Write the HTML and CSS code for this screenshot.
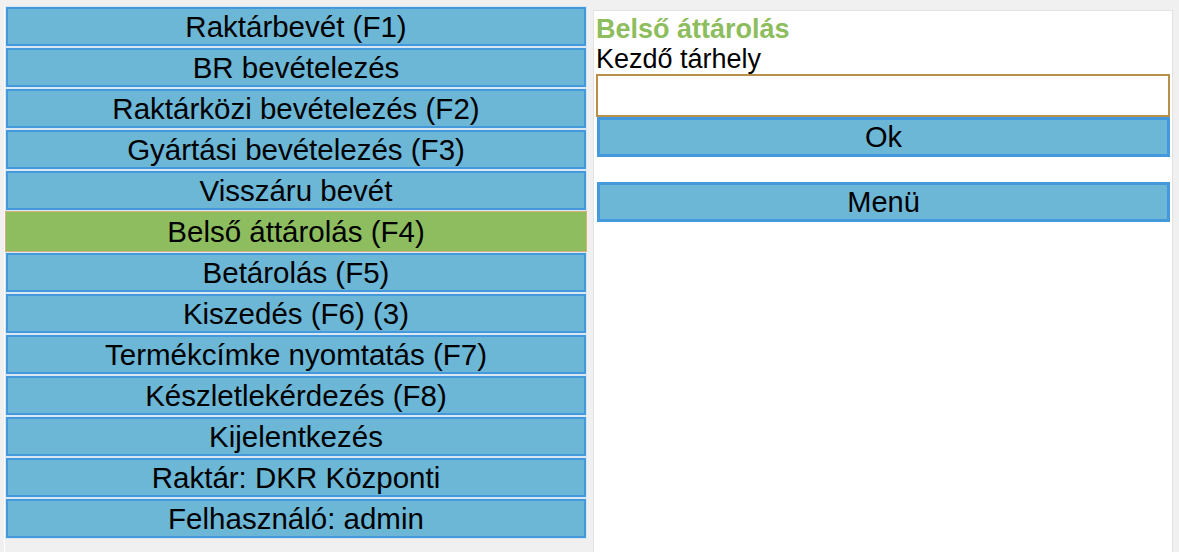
FILE: index.html
```html
<!DOCTYPE html>
<html lang="hu">
<head>
<meta charset="utf-8">
<link rel="stylesheet" href="styles.css">
</head>
<body>
<div class="app">
  <nav class="menu">
    <div class="item">Raktárbevét (F1)</div>
    <div class="item">BR bevételezés</div>
    <div class="item">Raktárközi bevételezés (F2)</div>
    <div class="item">Gyártási bevételezés (F3)</div>
    <div class="item">Visszáru bevét</div>
    <div class="item active">Belső áttárolás (F4)</div>
    <div class="item">Betárolás (F5)</div>
    <div class="item">Kiszedés (F6) (3)</div>
    <div class="item">Termékcímke nyomtatás (F7)</div>
    <div class="item">Készletlekérdezés (F8)</div>
    <div class="item">Kijelentkezés</div>
    <div class="item">Raktár: DKR Központi</div>
    <div class="item">Felhasználó: admin</div>
  </nav>
  <main class="panel">
    <div class="title">Belső áttárolás</div>
    <div class="label">Kezdő tárhely</div>
    <input class="field" type="text">
    <div class="btn">Ok</div>
    <div class="btn menu-btn">Menü</div>
  </main>
</div>
</body>
</html>
```
FILE: styles.css
```css
html, body {
  margin: 0;
  padding: 0;
  background: #f0f0f0;
  font-family: "Liberation Sans", Arial, sans-serif;
  color: #000;
}
.app {
  display: flex;
  align-items: stretch;
  height: 552px;
  padding: 7px 6px 0 4px;
  box-sizing: border-box;
}
.menu {
  width: 580px;
  display: flex;
  flex-direction: column;
  gap: 2px;
  border-left: 1px solid #fff;
  padding-left: 1px;
}
.item {
  height: 39px;
  box-sizing: border-box;
  background: #6cb6d6;
  border: 2px solid #4499dd;
  text-align: center;
  font-size: 29.5px;
  line-height: 36px;
  box-shadow: 0 0 0 1px #d8e8f2;
  white-space: nowrap;
}
.item.active {
  background: #8dbd5e;
  border-color: #8dbd5e;
  box-shadow: 0 0 0 1px #d8b27a;
}
.panel {
  margin-left: 7px;
  margin-top: 3px;
  flex: 1;
  background: #fff;
  border: 1px solid #e2e2e2;
  border-bottom: none;
  padding: 2px 1px 0 2px;
  display: flex;
  flex-direction: column;
}
.title {
  color: #8dbd5d;
  font-weight: bold;
  font-size: 27px;
  line-height: 32px;
}
.label {
  font-size: 27px;
  line-height: 28px;
}
.field {
  height: 43px;
  box-sizing: border-box;
  border: 2px solid #b8904a;
  margin: 1px 1px 0 0;
  padding: 0;
}
.btn {
  height: 40px;
  box-sizing: border-box;
  margin: 0 1px 0 1px;
  background: #6cb6d6;
  border: 3px solid #4499dd;
  text-align: center;
  font-size: 29px;
  line-height: 34px;
}
.menu-btn {
  margin-top: 25px;
}
```
